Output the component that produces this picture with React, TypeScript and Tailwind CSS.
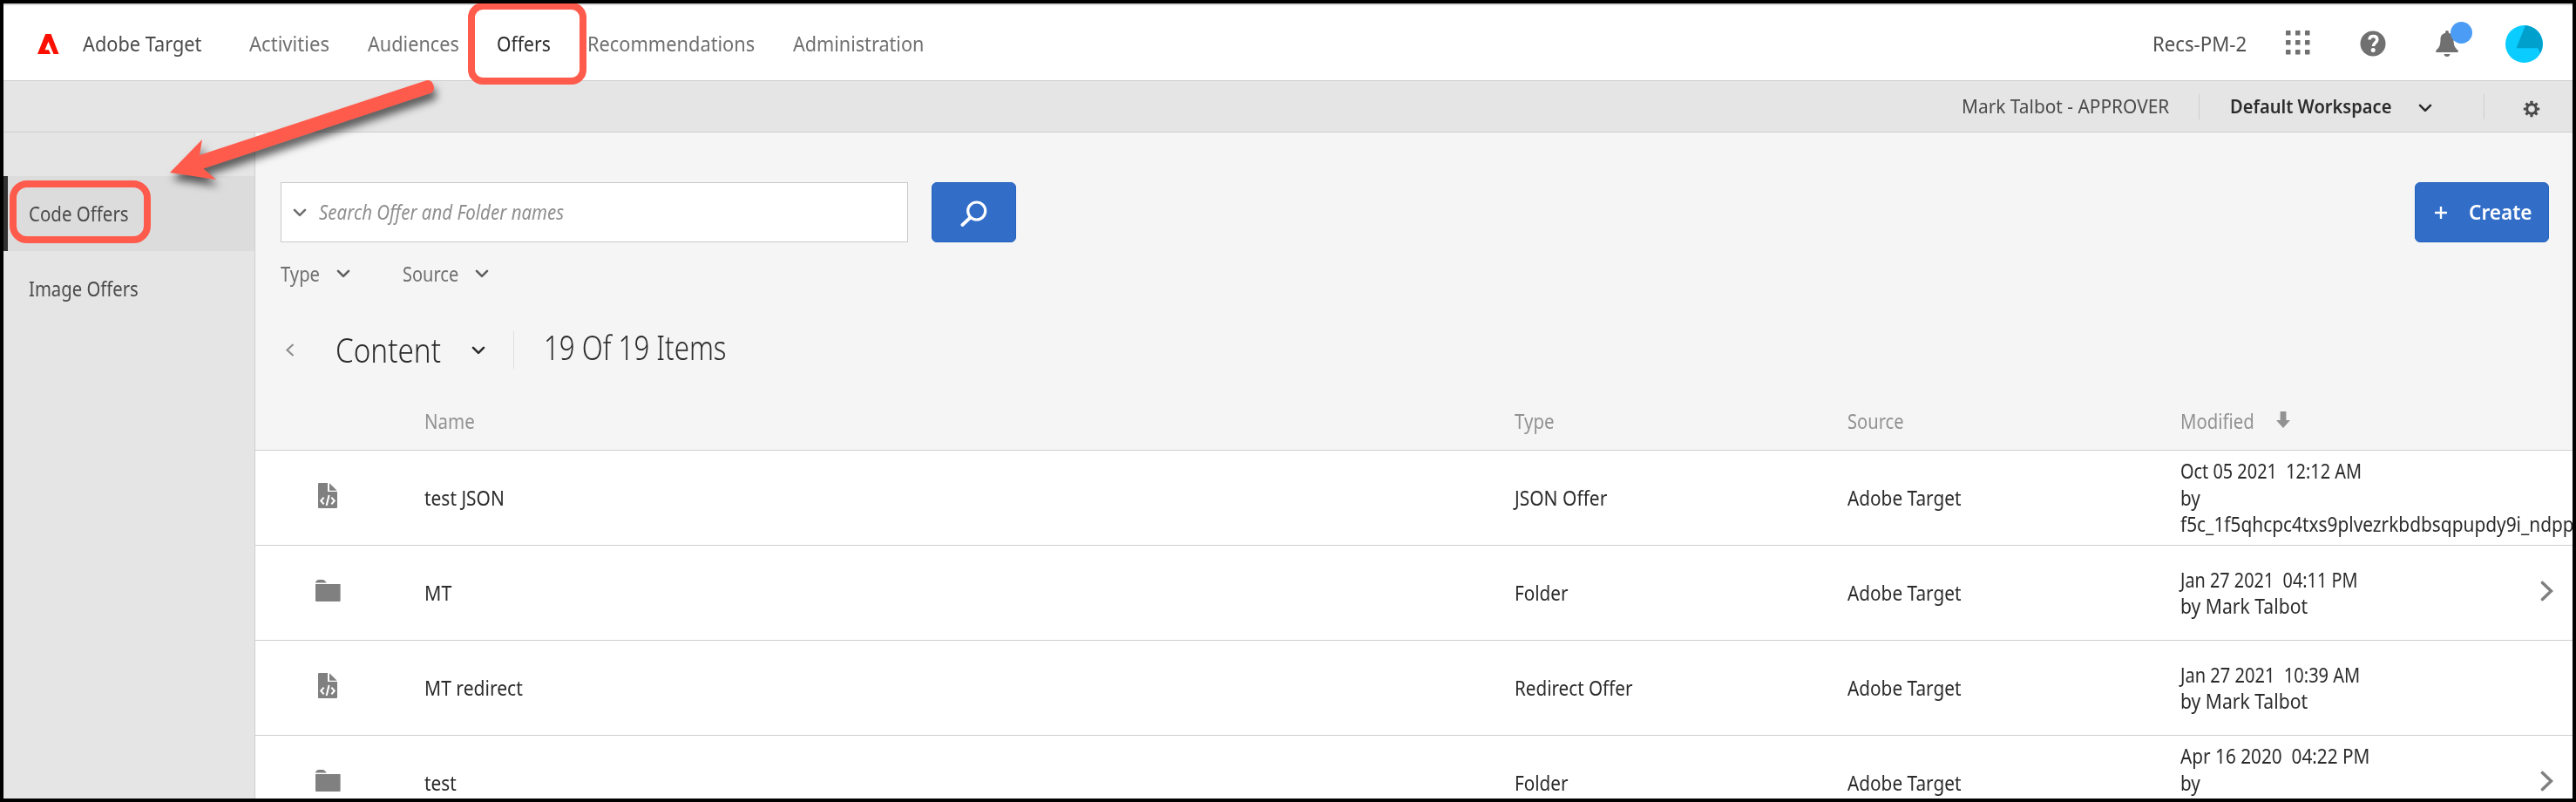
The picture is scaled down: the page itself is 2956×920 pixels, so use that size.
import type { ReactNode } from "react";

function T({ w, s, className = "", children }: { w: string; s: string; className?: string; children: ReactNode }) {
  return (
    <span className={`block shrink-0 whitespace-pre ${w} ${className}`}>
      <span className={`inline-block origin-left ${s}`}>{children}</span>
    </span>
  );
}

function Chevron({ className = "" }: { className?: string }) {
  return (
    <svg className={`h-[10px] w-[16px] shrink-0 ${className}`} viewBox="0 0 16 10" fill="none" stroke="currentColor" strokeWidth="2.600" strokeLinecap="round" strokeLinejoin="round">
      <path d="M2 1.800 8 7.800 14 1.800" />
    </svg>
  );
}

function FileIcon() {
  return (
    <svg className="ml-[72px] h-[29px] w-[22px] text-[#808080]" viewBox="0 0 22 29">
      <path fill="currentColor" d="M1 0h10v10h11v18a1 1 0 0 1-1 1H1a1 1 0 0 1-1-1V1a1 1 0 0 1 1-1z" />
      <path fill="currentColor" d="M13 .3 21.700 8.700H13z" />
      <path fill="none" stroke="#fff" strokeWidth="2.100" d="M6.600 16.600 3.300 20.500l3.300 3.900M15.400 16.600l3.300 3.900-3.300 3.900M12.600 14 9.600 26" />
    </svg>
  );
}

function FolderIcon() {
  return (
    <svg className="ml-[69px] h-[25px] w-[29px] text-[#808080]" viewBox="0 0 29 25" fill="currentColor">
      <path d="M0 3.600C0 1.500 2 0 4 0h4c2 0 4 2 4.600 3.600z" />
      <path d="M0 5h28.600v19a1 1 0 0 1-1 1H1a1 1 0 0 1-1-1z" />
    </svg>
  );
}

function NavBar() {
  return (
    <header className="flex h-[87px] shrink-0 items-center border-b border-[#cfcfcf] pt-[2px] text-[24px] text-[#707070]">
      <svg className="ml-[39px] h-[23px] w-[25px] shrink-0" viewBox="0 0 25 23" fill="#fa0f00">
        <path d="M9.200 0h6.300L24.500 23h-6L12.500 8.700 8.500 18.200H13l2 4.800H0z" />
      </svg>
      <div className="ml-[27px] flex">
        <T w="w-[191px]" s="scale-x-[0.905]" className="text-[#4b4b4b]">Adobe Target</T>
        <T w="w-[136px]" s="scale-x-[0.920]">Activities</T>
        <T w="w-[148px]" s="scale-x-[0.903]">Audiences</T>
        <T w="w-[104px]" s="scale-x-[0.880]" className="text-[#2c2c2c]">Offers</T>
        <T w="w-[236px]" s="scale-x-[0.908]">Recommendations</T>
        <T w="w-[160px]" s="scale-x-[0.900]">Administration</T>
      </div>
      <div className="ml-auto flex items-center">
        <T w="w-[153px]" s="scale-x-[0.925]" className="text-[#505050]">Recs-PM-2</T>
        <svg className="mb-[2px] h-[28px] w-[28px]" viewBox="0 0 28 28" fill="currentColor">
          {[0, 11, 22].map((y) => [0, 11, 22].map((x) => <rect key={`${x}-${y}`} x={x} y={y} width="5.500" height="5.500" rx="0.500" />))}
        </svg>
        <svg className="ml-[57px] h-[30px] w-[30px]" viewBox="0 0 30 30">
          <circle cx="15" cy="15" r="14.500" fill="currentColor" />
          <path d="M11 10.500c0-2.700 1.800-4 4.400-4 2.700 0 4.400 1.500 4.400 3.900 0 3.400-4.400 3.800-4.400 7.600" fill="none" stroke="#fff" strokeWidth="3.600" />
          <circle cx="15.200" cy="22.600" r="2.500" fill="#fff" />
        </svg>
        <div className="relative ml-[57px] h-[30px] w-[26px]">
          <svg className="h-[30px] w-[26px]" viewBox="0 0 26 30" fill="currentColor">
            <path d="M13 0c1.200 0 1.900.8 1.900 1.800v1.300C18.800 3.800 20.500 6.500 20.500 10c0 7 1.500 10 5.200 12.800V25H.3v-2.200C4 20 5.500 17 5.500 10c0-3.500 1.700-6.200 5.600-6.900V1.800C11.100.8 11.800 0 13 0zM9.600 27h6.800c0 1.800-1.400 3-3.400 3s-3.400-1.200-3.400-3z" />
          </svg>
          <span className="absolute -top-[10px] left-[17px] size-[25px] rounded-full bg-[#4b9cf5]" />
        </div>
        <svg className="mr-[34px] ml-[54px] h-[43px] w-[43px]" viewBox="0 0 43 43">
          <circle cx="21.500" cy="21.500" r="21.500" fill="#0accff" />
          <path d="M23 .1A21.500 21.500 0 0 1 40 32L37 26.300H12.500z" fill="#00a0cc" />
        </svg>
      </div>
    </header>
  );
}

function WorkspaceBar() {
  return (
    <div className="flex h-[59px] shrink-0 items-center justify-end border-b border-[#cfcfcf] bg-[#e5e5e5] text-[22px] text-[#4b4b4b]">
      <T w="w-[272px]" s="scale-x-[0.949]" className="-mt-[2px]">Mark Talbot - APPROVER</T>
      <span className="h-[29px] w-px bg-[#cfcfcf]" />
      <T w="w-[216px]" s="scale-x-[0.914]" className="-mt-[2px] ml-[35px] font-semibold text-[#2c2c2c]">Default Workspace</T>
      <Chevron className="mt-1 text-[#2c2c2c]" />
      <span className="ml-[59px] h-[29px] w-px bg-[#cfcfcf]" />
      <svg className="mt-1.5 mr-[37px] ml-[44px] h-[20px] w-[20px]" viewBox="0 0 20 20">
        <circle cx="10" cy="10" r="5.300" fill="none" stroke="currentColor" strokeWidth="3" />
        {[0, 45, 90, 135, 180, 225, 270, 315].map((a) => (
          <rect key={a} x="8.400" y="0.800" width="3.200" height="4" rx="0.500" fill="currentColor" transform={`rotate(${a} 10 10)`} />
        ))}
      </svg>
    </div>
  );
}

function Sidebar() {
  return (
    <nav className="w-[289px] shrink-0 border-r border-[#cfcfcf] bg-[#e5e5e5] pt-[50px] text-[23px] text-[#4b4b4b]">
      <div className="flex h-[86px] items-center border-l-[5px] border-[#323232] bg-[#dcdcdc] pl-[24px]">
        <T w="w-[125px]" s="scale-x-[0.890]">Code Offers</T>
      </div>
      <div className="flex h-[86px] items-center pl-[29px]">
        <T w="w-[130px]" s="scale-x-[0.882]">Image Offers</T>
      </div>
    </nav>
  );
}

const columns = "grid grid-cols-[194px_1251px_382px_382px_1fr]";

function json() {
  return <T w="w-[110px]" s="scale-x-[0.912]">JSON Offer</T>;
}
function folder() {
  return <T w="w-[65px]" s="scale-x-[0.900]">Folder</T>;
}

const rows = [
  {
    folder: false,
    name: <T w="w-[120px]" s="scale-x-[0.910]">test JSON</T>,
    type: json(),
    modified: (
      <>
        <T w="w-[400px]" s="scale-x-[0.865]">Oct 05 2021  12:12 AM</T>
        <T w="w-[400px]" s="scale-x-[0.900]">by</T>
        <T w="w-[450px]" s="scale-x-[0.907]">f5c_1f5qhcpc4txs9plvezrkbdbsqpupdy9i_ndpp</T>
      </>
    ),
  },
  {
    folder: true,
    name: <T w="w-[120px]" s="scale-x-[0.930]">MT</T>,
    type: folder(),
    modified: (
      <>
        <T w="w-[400px]" s="scale-x-[0.863]">Jan 27 2021  04:11 PM</T>
        <T w="w-[400px]" s="scale-x-[0.918]">by Mark Talbot</T>
      </>
    ),
  },
  {
    folder: false,
    name: <T w="w-[120px]" s="scale-x-[0.917]">MT redirect</T>,
    type: <T w="w-[140px]" s="scale-x-[0.897]">Redirect Offer</T>,
    modified: (
      <>
        <T w="w-[400px]" s="scale-x-[0.872]">Jan 27 2021  10:39 AM</T>
        <T w="w-[400px]" s="scale-x-[0.918]">by Mark Talbot</T>
      </>
    ),
  },
  {
    folder: true,
    name: <T w="w-[120px]" s="scale-x-[0.905]">test</T>,
    type: folder(),
    modified: (
      <>
        <T w="w-[400px]" s="scale-x-[0.903]">Apr 16 2020  04:22 PM</T>
        <T w="w-[400px]" s="scale-x-[0.900]">by</T>
        <span className="block h-[30.500px]" />
      </>
    ),
  },
];

function OffersTable() {
  return (
    <div className="mt-[15px] text-[23px] leading-[30.500px] text-[#2c2c2c]">
      <div className={`${columns} h-[67px] items-center border-b border-[#cfcfcf] text-[#929292]`}>
        <span />
        <T w="w-[60px]" s="scale-x-[0.890]">Name</T>
        <T w="w-[60px]" s="scale-x-[0.890]">Type</T>
        <T w="w-[70px]" s="scale-x-[0.875]">Source</T>
        <div className="flex items-center">
          <T w="w-[110px]" s="scale-x-[0.885]">Modified</T>
          <svg className="mb-[3px] h-[19px] w-[16px]" viewBox="0 0 16 19" fill="currentColor">
            <path d="M4.600 0h6.800v10H16l-8 9-8-9h4.600z" />
          </svg>
        </div>
      </div>
      {rows.map((row, i) => (
        <div key={i} className={`${columns} h-[109px] items-center border-b border-[#cfcfcf] bg-white`}>
          <div className="mb-[5px]">{row.folder ? <FolderIcon /> : <FileIcon />}</div>
          {row.name}
          {row.type}
          <T w="w-[140px]" s="scale-x-[0.903]">Adobe Target</T>
          <div className="flex items-center justify-between">
            <div className="w-[400px]">{row.modified}</div>
            {row.folder && (
              <svg className="mr-[22px] mb-[5px] h-[24px] w-[15px] shrink-0 text-[#808080]" viewBox="0 0 15 24" fill="none" stroke="currentColor" strokeWidth="3.600" strokeLinecap="round">
                <path d="M2.500 2.500 12.500 12 2.500 21.500" />
              </svg>
            )}
          </div>
        </div>
      ))}
    </div>
  );
}

function Main() {
  return (
    <main className="min-w-0 flex-1 overflow-hidden bg-[#f5f5f5]">
      <div className="flex pt-[57px] pl-[29px]">
        <div className="flex h-[69px] w-[720px] items-center border border-[#c8c8c8] bg-white pl-[13px] text-[23px] text-[#8e8e8e] italic">
          <Chevron className="text-[#6e6e6e]" />
          <T w="w-[300px]" s="scale-x-[0.890]" className="ml-[14px]">Search Offer and Folder names</T>
        </div>
        <div className="ml-[27px] flex h-[69px] w-[97px] items-center justify-center rounded-md border border-[#2361c0] bg-[#326ec8]">
          <svg className="h-[32px] w-[32px]" viewBox="0 0 32 32" fill="none" stroke="#fff" strokeWidth="3.200">
            <circle cx="18.700" cy="14" r="10" />
            <path d="M11.500 21.500 2.400 30" strokeWidth="3.800" strokeLinecap="round" />
          </svg>
        </div>
        <div className="mr-[27px] ml-auto flex h-[69px] w-[154px] items-center rounded-md border border-[#2361c0] bg-[#326ec8] pl-[22px] text-[24px] font-semibold text-white">
          <svg className="h-[14px] w-[14px]" viewBox="0 0 14 14" stroke="#fff" strokeWidth="2.400">
            <path d="M7 0v14M0 7h14" />
          </svg>
          <T w="w-[80px]" s="scale-x-[0.940]" className="-mt-[2px] ml-[25px]">Create</T>
        </div>
      </div>
      <div className="mt-[19px] flex h-[34px] items-center pl-[29px] text-[23px] text-[#707070]">
        <T w="w-[64px]" s="scale-x-[0.880]">Type</T>
        <Chevron className="text-[#5e5e5e]" />
        <T w="w-[83px]" s="scale-x-[0.870]" className="ml-[60px]">Source</T>
        <Chevron className="text-[#5e5e5e]" />
      </div>
      <div className="mt-[37px] flex h-[67px] items-center pl-[34px] text-[38px] font-[350] text-[#2c2c2c]">
        <svg className="h-[15px] w-[11px] text-[#8e8e8e]" viewBox="0 0 11 15" fill="none" stroke="currentColor" strokeWidth="2.200">
          <path d="M9.500 1 2.500 7.500 9.500 14" />
        </svg>
        <T w="w-[156px]" s="scale-x-[0.875]" className="ml-[47px]">Content</T>
        <Chevron />
        <span className="ml-[32px] h-[43px] w-px bg-[#dedede]" />
        <T w="w-[220px]" s="scale-x-[0.822]" className="-mt-[6px] ml-[34px]">19 Of 19 Items</T>
      </div>
      <OffersTable />
    </main>
  );
}

function Annotations() {
  return (
    <>
      <div className="absolute top-[3px] left-[537px] h-[94px] w-[136px] rounded-[17px] border-8 border-[#ff5b4c]" />
      <div className="absolute top-[207px] left-[11px] h-[72px] w-[162px] rounded-[20px] border-8 border-[#ff5b4c]" />
      <svg className="absolute top-[80px] left-[180px] h-[150px] w-[340px] drop-shadow-[3px_8px_5px_rgba(0,0,0,0.600)]" viewBox="180 80 340 150" fill="#ff5b4c">
        <path d="M195 198 232 160 229 178 487 93Q494 90 497 96.500Q500 104 494 107L233.500 193.500 248 206z" />
      </svg>
    </>
  );
}

export default function App() {
  return (
    <div className="relative flex h-[920px] w-[2956px] flex-col overflow-hidden border-4 border-black bg-white font-['Noto_Sans',sans-serif]">
      <div className="h-[2px] shrink-0 bg-[#d8d8d8]" />
      <NavBar />
      <WorkspaceBar />
      <div className="flex min-h-0 flex-1">
        <Sidebar />
        <Main />
      </div>
      <div className="absolute -top-1 -left-1">
        <Annotations />
      </div>
    </div>
  );
}
